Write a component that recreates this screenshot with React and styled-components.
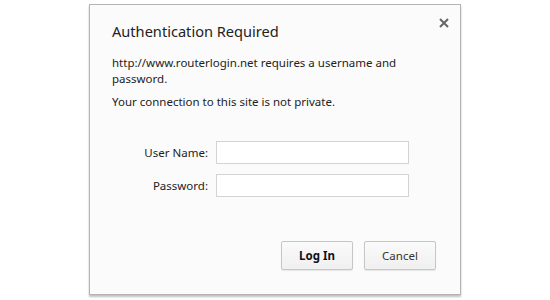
import styled, { createGlobalStyle } from 'styled-components';

const GlobalStyle = createGlobalStyle`
  html, body {
    margin: 0;
    padding: 0;
    background: #ffffff;
  }
  body {
    width: 550px;
    height: 300px;
    overflow: hidden;
    font-family: "Noto Sans", "Open Sans", Arial, sans-serif;
  }
`;

const Page = styled.div`
  display: flex;
  justify-content: center;
  padding-top: 4px;
`;

const Dialog = styled.div`
  position: relative;
  box-sizing: border-box;
  width: 372px;
  height: 291px;
  background: #fbfbfb;
  border: 1px solid #b4b4b4;
  box-shadow: 0 2px 2px rgba(0, 0, 0, 0.25);
  padding: 15px 0 0 22px;
  color: #222;
  display: flex;
  flex-direction: column;
`;

const Title = styled.h1`
  margin: 0;
  font-size: 14.6px;
  line-height: 22px;
  font-weight: 400;
  color: #222;
`;

const Close = styled.button`
  position: absolute;
  top: 10px;
  right: 8px;
  width: 16px;
  height: 16px;
  padding: 0;
  border: none;
  background: transparent;
  display: flex;
  align-items: center;
  justify-content: center;
`;

const Message = styled.p`
  margin: ${(p) => p.$top}px 0 0;
  width: 300px;
  font-size: 11.5px;
  line-height: 16px;
  color: #222;
`;

const Form = styled.div`
  display: grid;
  grid-template-columns: 96px 193px;
  column-gap: 8px;
  row-gap: 10px;
  margin-top: 31px;
  align-items: center;
`;

const Label = styled.label`
  text-align: right;
  font-size: 11.5px;
  color: #222;
`;

const Input = styled.input`
  box-sizing: border-box;
  height: 23px;
  width: 193px;
  border: 1px solid #d3d3d3;
  background: #fff;
  margin: 0;
`;

const Actions = styled.div`
  display: flex;
  justify-content: flex-end;
  gap: 11px;
  margin-top: 44px;
  padding-right: 24px;
`;

const Button = styled.button`
  box-sizing: border-box;
  width: 72px;
  height: 29px;
  border: 1px solid #c6c6c6;
  border-radius: 2px;
  background: linear-gradient(#fafafa, #f0f0f0);
  box-shadow: 0 1px 1px rgba(0, 0, 0, 0.08);
  font-family: "Noto Sans", "Open Sans", Arial, sans-serif;
  font-size: 11.5px;
  font-weight: ${(p) => (p.$primary ? 700 : 400)};
  color: ${(p) => (p.$primary ? '#111' : '#333')};
`;

export default function App() {
  return (
    <>
      <GlobalStyle />
      <Page>
        <Dialog>
          <Close aria-label="Close">
            <svg width="10" height="10" viewBox="0 0 10 10">
              <path d="M1 1 L9 9 M9 1 L1 9" stroke="#666" strokeWidth="2" />
            </svg>
          </Close>
          <Title>Authentication Required</Title>
          <Message $top={13}>
            http://www.routerlogin.net requires a username and password.
          </Message>
          <Message $top={7}>Your connection to this site is not private.</Message>
          <Form>
            <Label>User Name:</Label>
            <Input type="text" />
            <Label>Password:</Label>
            <Input type="password" />
          </Form>
          <Actions>
            <Button $primary>Log In</Button>
            <Button>Cancel</Button>
          </Actions>
        </Dialog>
      </Page>
    </>
  );
}
